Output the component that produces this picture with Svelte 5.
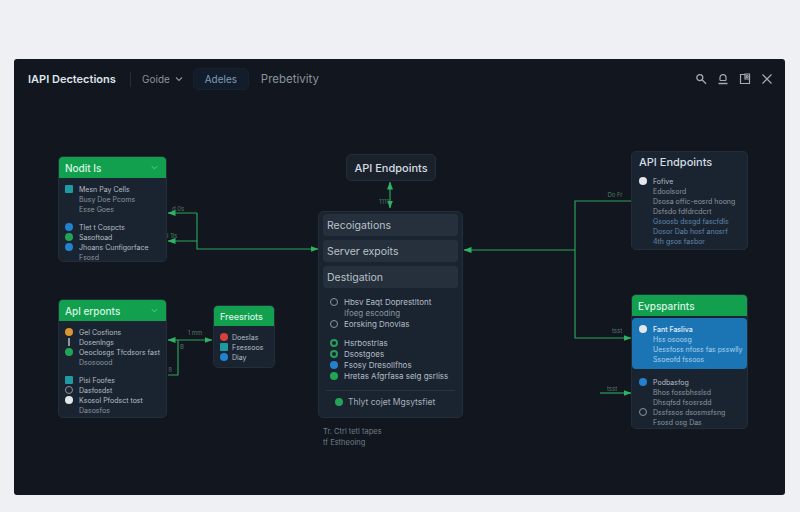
<script lang="ts">
  type Row = { icon?: string; text: string; tone?: string };

  const nodeOne: Row[][] = [
    [
      { icon: 'teal', text: 'Mesn Pay Cells' },
      { text: 'Busy Doe Pcoms', tone: 'dim' },
      { text: 'Esse Goes', tone: 'dim' }
    ],
    [
      { icon: 'blue', text: 'Tlet t Cospcts' },
      { icon: 'green', text: 'Sasoftoad' },
      { icon: 'blue', text: 'Jhoans Cunfigorface' },
      { text: 'Fsosd', tone: 'dim' }
    ]
  ];

  const nodeTwo: Row[][] = [
    [
      { icon: 'orange', text: 'Gel Cosfions' },
      { icon: 'line', text: 'Dosenlngs' },
      { icon: 'green', text: 'Oeoclosgs Tfcdsors fast' },
      { text: 'Dsosoood', tone: 'dim' }
    ],
    [
      { icon: 'teal', text: 'Pisi Foofes' },
      { icon: 'ring', text: 'Dasfosdst' },
      { icon: 'white', text: 'Ksosol Pfodsct tost' },
      { text: 'Dasosfos', tone: 'dim' }
    ]
  ];

  const nodeThree: Row[] = [
    { icon: 'red', text: 'Doeslas' },
    { icon: 'teal', text: 'Fsessoos' },
    { icon: 'blue', text: 'Diay' }
  ];

  const centerRows = ['Recoigations', 'Server expoits', 'Destigation'];

  const centerList: Row[][] = [
    [
      { icon: 'ring', text: 'Hbsv Eaqt Doprestltont' },
      { text: 'Ifoeg escoding', tone: 'dim' },
      { icon: 'ring', text: 'Eorsking Dnovlas' }
    ],
    [
      { icon: 'ringGreen', text: 'Hsrbostrlas' },
      { icon: 'ringGreen', text: 'Dsostgoes' },
      { icon: 'blue', text: 'Fsosy Dresollfhos' },
      { icon: 'green', text: 'Hretas Afgrfasa selg gsrliss' }
    ]
  ];

  const rightOne: Row[] = [
    { icon: 'white', text: 'Fofive' },
    { text: 'Edoolsord', tone: 'dim' },
    { text: 'Dsosa offic-eosrd hoong', tone: 'dim' },
    { text: 'Dsfsdo fdfdrcdcrt', tone: 'dim' },
    { text: 'Gsoosb dssgd fascfdls', tone: 'bluish' },
    { text: 'Dosor Dab hosf anosrf', tone: 'bluish' },
    { text: '4th gsos fasbor', tone: 'bluish' }
  ];

  const rightBlue: Row[] = [
    { icon: 'white', text: 'Fant Fasliva', tone: 'bright' },
    { text: 'Hss osoosg', tone: 'pale' },
    { text: 'Uessfoss nfoss fas psswlly', tone: 'pale' },
    { text: 'Ssoeofd fssoos', tone: 'pale' }
  ];

  const rightLower: Row[] = [
    { icon: 'blue', text: 'Podbasfog' },
    { text: 'Bhos fossbhsslsd', tone: 'dim' },
    { text: 'Dhsqfsd fsosrsdd', tone: 'dim' },
    { icon: 'ring', text: 'Dssfssos dsosmsfsng', tone: 'dim' },
    { text: 'Fsosd osg Das', tone: 'dim' }
  ];

  const labels = [
    { x: 178, y: 211, t: 'd.0s' },
    { x: 171, y: 238, t: 'fl 1ls' },
    { x: 195, y: 335, t: '1 mm' },
    { x: 182, y: 349, t: 'B' },
    { x: 170, y: 372, t: '8' },
    { x: 384, y: 204, t: '1111' },
    { x: 615, y: 197, t: 'Do Fr' },
    { x: 617, y: 333, t: 'tsst' },
    { x: 612, y: 391, t: 'tsst' }
  ];
</script>

{#snippet rows(list: Row[])}
  {#each list as row}
    <div class="row {row.tone ?? ''}">
      <span class="dot {row.icon ?? 'none'}"></span>
      <span>{row.text}</span>
    </div>
  {/each}
{/snippet}

<div class="window">
  <header class="topbar">
    <strong class="title">IAPI Dectections</strong>
    <span class="sep"></span>
    <span class="menu">Goide
      <svg width="8" height="8" viewBox="0 0 8 8" fill="none" stroke="currentColor" stroke-width="1.1"><path d="M1 2.5 4 5.5 7 2.5" /></svg>
    </span>
    <span class="pill">Adeles</span>
    <span class="menu wide">Prebetivity</span>
    <div class="tools">
      <svg width="12" height="12" viewBox="0 0 12 12" fill="none" stroke="currentColor" stroke-width="1.3"><circle cx="4.8" cy="4.6" r="3" /><path d="M7 6.8 11 10.8" /></svg>
      <svg width="12" height="12" viewBox="0 0 12 12" fill="none" stroke="currentColor" stroke-width="1.2"><path d="M3 7.5V4.6a3 3 0 0 1 6 0v2.9" /><path d="M3 7.5h6" /><path d="M1.5 10.5h9" stroke-width="1.6" /></svg>
      <svg width="12" height="12" viewBox="0 0 12 12" fill="none" stroke="currentColor" stroke-width="1.2"><path d="M6 1.5H1.5v9h9V6" /><path d="M6 1h4.5v5H6z" /><circle cx="8.2" cy="3.5" r="1" /></svg>
      <svg width="12" height="12" viewBox="0 0 12 12" fill="none" stroke="currentColor" stroke-width="1.2"><path d="M1.5 1.5 10.5 10.5M10.5 1.5 1.5 10.5" /></svg>
    </div>
  </header>

  <main class="canvas">
    <svg class="wires" viewBox="14 99 771 396" fill="none" stroke="#2aa35a" stroke-width="1.2">
      <defs>
        <marker id="tip" markerUnits="userSpaceOnUse" markerWidth="8" markerHeight="6" refX="7.5" refY="3" orient="auto-start-reverse">
          <path d="M0 0 8 3 0 6z" fill="#2fb263" stroke="none" />
        </marker>
      </defs>
      <path d="M197 213H168" marker-end="url(#tip)" />
      <path d="M197 241H168" marker-end="url(#tip)" />
      <path d="M197 213V249H318" marker-end="url(#tip)" />
      <path d="M168 340H212" marker-start="url(#tip)" marker-end="url(#tip)" />
      <path d="M178 340V375H168" />
      <path d="M390 182V208" marker-start="url(#tip)" marker-end="url(#tip)" />
      <path d="M575 250H464" marker-end="url(#tip)" />
      <path d="M631 201H575V338H631" marker-end="url(#tip)" />
      <path d="M600 393H631" marker-end="url(#tip)" />
      {#each labels as l}
        <text x={l.x} y={l.y} class="wire-label">{l.t}</text>
      {/each}
    </svg>

    <section class="node n-one">
      <h3 class="head">Nodit Is <svg width="7" height="7" viewBox="0 0 8 8" fill="none" stroke="currentColor"><path d="M1 2.5 4 5.5 7 2.5" /></svg></h3>
      <div class="body">
        {#each nodeOne as group}
          <div class="group">{@render rows(group)}</div>
        {/each}
      </div>
    </section>

    <section class="node n-two">
      <h3 class="head">Apl erponts <svg width="7" height="7" viewBox="0 0 8 8" fill="none" stroke="currentColor"><path d="M1 2.5 4 5.5 7 2.5" /></svg></h3>
      <div class="body">
        {#each nodeTwo as group}
          <div class="group">{@render rows(group)}</div>
        {/each}
      </div>
    </section>

    <section class="node n-three">
      <h3 class="head">Freesriots</h3>
      <div class="body"><div class="group">{@render rows(nodeThree)}</div></div>
    </section>

    <div class="node n-api">API Endpoints</div>

    <section class="node n-center">
      {#each centerRows as r}
        <div class="bar">{r}</div>
      {/each}
      <div class="list">
        {#each centerList as group}
          <div class="group">{@render rows(group)}</div>
        {/each}
      </div>
      <div class="foot"><span class="dot green"></span>Thlyt cojet Mgsytsfiet</div>
    </section>

    <p class="note">Tr. Ctrl tetl tapes<br />tf Estheoing</p>

    <section class="node n-right-one">
      <h3 class="plain">API Endpoints</h3>
      <div class="group">{@render rows(rightOne)}</div>
    </section>

    <section class="node n-right-two">
      <h3 class="head">Evpsparints</h3>
      <div class="blue-block"><div class="group">{@render rows(rightBlue)}</div></div>
      <div class="body"><div class="group">{@render rows(rightLower)}</div></div>
    </section>
  </main>
</div>

<style>
  :global(body) {
    margin: 0;
    background: #eef0f4;
    font-family: Inter, 'Noto Sans', sans-serif;
  }
  .window {
    margin: 59px 15px 17px 14px;
    height: 436px;
    display: flex;
    flex-direction: column;
    background: #11161f;
    border-radius: 3px;
    overflow: hidden;
  }
  .topbar {
    height: 40px;
    flex: none;
    display: flex;
    align-items: center;
    padding: 0 12px 0 14px;
    color: #aab2bb;
    font-size: 10px;
  }
  .title {
    width: 89px;
    color: #dfe4ea;
    font-size: 11px;
    font-weight: 600;
    white-space: nowrap;
  }
  .sep {
    width: 1px;
    height: 15px;
    margin: 0 11px 0 13px;
    background: #272e38;
  }
  .menu {
    display: flex;
    align-items: center;
    gap: 5px;
    color: #8b939c;
  }
  .menu.wide {
    font-size: 11.5px;
  }
  .pill {
    margin: 0 12px 0 10px;
    width: 56px;
    box-sizing: border-box;
    height: 22px;
    display: flex;
    align-items: center;
    justify-content: center;
    color: #7d9db8;
    background: #121c2a;
    border: 1px solid #17222f;
    border-radius: 5px;
  }
  .tools {
    margin-left: auto;
    display: flex;
    gap: 10px;
    color: #a4abb3;
  }
  .canvas {
    position: relative;
    flex: 1;
  }
  .wires {
    position: absolute;
    inset: 0;
    width: 100%;
    height: 100%;
  }
  .wire-label {
    fill: #4f7a62;
    stroke: none;
    font-size: 6px;
    text-anchor: middle;
  }
  .node {
    position: absolute;
    background: #1a2430;
    border: 1px solid #232e3a;
    border-radius: 5px;
    box-sizing: border-box;
    overflow: hidden;
  }
  .head {
    margin: 0;
    height: 21px;
    padding: 0 8px 0 6px;
    display: flex;
    align-items: center;
    justify-content: space-between;
    background: #12a04f;
    color: #d8f5e2;
    font-size: 10px;
    font-weight: 500;
  }
  .head svg {
    color: #6fcf96;
  }
  .body {
    padding: 6px 6px 0;
    display: flex;
    flex-direction: column;
    gap: 8px;
  }
  .group {
    display: flex;
    flex-direction: column;
  }
  .row {
    display: flex;
    align-items: center;
    gap: 6px;
    height: 10px;
    font-size: 7px;
    color: #b4bdc6;
    white-space: nowrap;
  }
  .row.dim {
    color: #8a949e;
  }
  .row.bluish {
    color: #5f86ad;
  }
  .row.bright {
    color: #e6f2fb;
    font-weight: 500;
  }
  .row.pale {
    color: #a9d2ee;
  }
  .dot {
    flex: none;
    width: 8px;
    height: 8px;
    border-radius: 50%;
  }
  .dot.none {
    background: none;
  }
  .dot.teal {
    background: #1f9aa0;
    border-radius: 1px;
  }
  .dot.blue {
    background: #2382cf;
  }
  .dot.green {
    background: #23a455;
  }
  .dot.orange {
    background: #d9962d;
  }
  .dot.red {
    background: #d5423d;
  }
  .dot.white {
    background: #e3e7eb;
  }
  .dot.ring {
    box-sizing: border-box;
    background: none;
    border: 1px solid #8d969f;
  }
  .dot.ringGreen {
    box-sizing: border-box;
    background: none;
    border: 2px solid #2b9c5a;
  }
  .dot.line {
    width: 2px;
    margin: 0 3px;
    border-radius: 0;
    background: #8d969f;
  }
  .n-one {
    left: 44px;
    top: 57px;
    width: 109px;
    height: 106px;
  }
  .n-two {
    left: 44px;
    top: 200px;
    width: 109px;
    height: 119px;
  }
  .n-three {
    left: 199px;
    top: 206px;
    width: 62px;
    height: 63px;
  }
  .n-three .head {
    height: 20px;
    font-size: 9px;
  }
  .n-three .row {
    gap: 4px;
  }
  .n-api {
    left: 332px;
    top: 55px;
    width: 90px;
    height: 27px;
    display: flex;
    align-items: center;
    justify-content: center;
    color: #d5dbe2;
    font-size: 11px;
    font-weight: 500;
    background: #1a212b;
  }
  .n-center {
    left: 304px;
    top: 112px;
    width: 145px;
    height: 207px;
    padding: 2px 4px;
    display: flex;
    flex-direction: column;
    gap: 4px;
  }
  .bar {
    height: 22px;
    display: flex;
    align-items: center;
    padding: 0 4px;
    color: #b9c1c9;
    font-size: 10.5px;
    background: #25303c;
    border-radius: 4px;
  }
  .list {
    margin-top: 4px;
    padding: 0 7px;
    display: flex;
    flex-direction: column;
    gap: 8px;
  }
  .list .row {
    height: 11px;
    font-size: 8px;
  }
  .foot {
    margin: 5px 3px 0;
    padding-top: 6px;
    display: flex;
    align-items: center;
    gap: 5px;
    padding-left: 9px;
    border-top: 1px solid #2a3541;
    color: #a5aeb7;
    font-size: 8.5px;
  }
  .note {
    position: absolute;
    left: 309px;
    top: 327px;
    margin: 0;
    color: #727c86;
    font-size: 7.5px;
    line-height: 11px;
  }
  .n-right-one {
    left: 617px;
    top: 52px;
    width: 117px;
    height: 99px;
    padding: 3px 7px;
  }
  .plain {
    margin: 0 0 7px;
    color: #d5dbe2;
    font-size: 11px;
    font-weight: 500;
    line-height: 14px;
  }
  .n-right-two {
    left: 617px;
    top: 195px;
    width: 117px;
    height: 135px;
  }
  .blue-block {
    margin-top: 2px;
    height: 51px;
    padding: 6px 7px 0;
    box-sizing: border-box;
    background: #1b75b5;
    border-radius: 4px;
  }
  .n-right-two .body {
    padding: 8px 7px 0;
  }
</style>
